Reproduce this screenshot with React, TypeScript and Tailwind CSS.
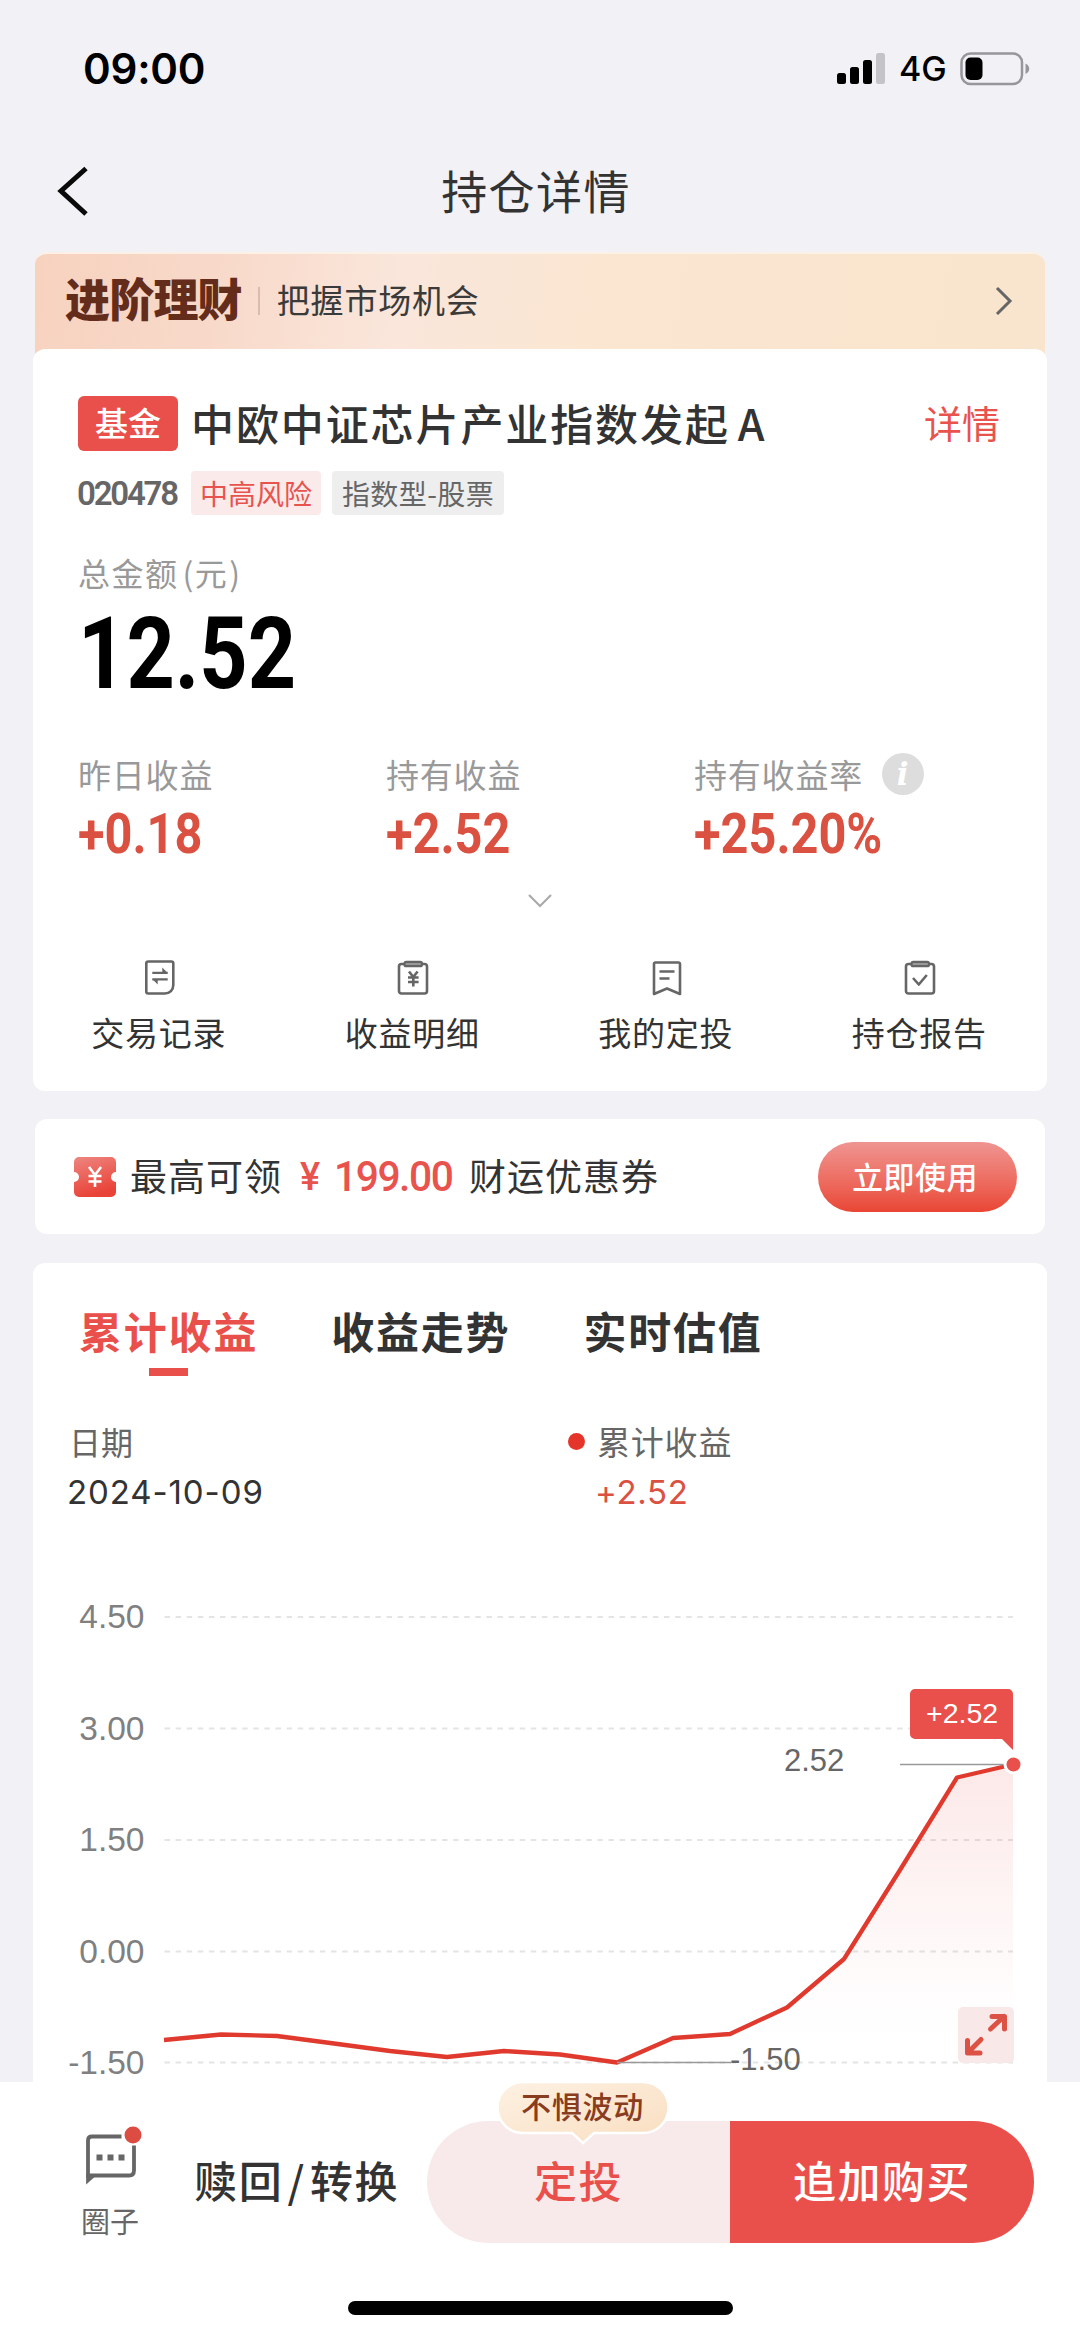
import type { ReactNode } from 'react'

const metrics = [
  { label: '昨日收益', value: '+0.18' },
  { label: '持有收益', value: '+2.52' },
  { label: '持有收益率', value: '+25.20%', info: true },
]

const tabs = ['累计收益', '收益走势', '实时估值']

const gridLines = [
  { label: '4.50', y: 37 },
  { label: '3.00', y: 148.5 },
  { label: '1.50', y: 260 },
  { label: '0.00', y: 371.5 },
  { label: '-1.50', y: 482.5 },
]

const points = [
  [131, 460], [188, 454.5], [244, 456], [301, 463.5], [357, 471], [414, 477], [471, 471], [527, 474.5],
  [584, 482.5], [640, 458], [697, 454], [754, 427.5], [811, 379], [867, 290], [924, 197.5], [980, 184.5],
]
const linePath = points.map(([x, y], i) => `${i === 0 ? 'M' : 'L'}${x} ${y}`).join(' ')

function StatusBar() {
  return (
    <div className="flex h-[138px] items-center justify-between pl-[83px] pr-[50px]">
      <span className="font-['Inter',sans-serif] text-[42px] font-semibold leading-none tracking-[-0.2px] text-black">09:00</span>
      <div className="flex items-center">
        <svg width="48" height="34" viewBox="0 0 48 34">
          <rect x="0" y="21" width="9" height="11" rx="2.5" />
          <rect x="13" y="15" width="9" height="17" rx="2.5" />
          <rect x="26" y="8" width="9" height="24" rx="2.5" />
          <rect x="39" y="1" width="9" height="31" rx="2.5" fill="#c4c4c8" />
        </svg>
        <span className="ml-[14px] w-[61px] font-['Inter',sans-serif] text-[34px] font-medium leading-none text-black">4G</span>
        <svg width="70" height="34" viewBox="0 0 70 34">
          <rect x="1.5" y="1.5" width="60.500" height="30.500" rx="9" fill="none" stroke="#97979b" strokeWidth="2.5" />
          <rect x="5.500" y="5.500" width="17" height="22.500" rx="5" />
          <path d="M65.500 11.500c5 2 5 8.500 0 10.500z" fill="#97979b" />
        </svg>
      </div>
    </div>
  )
}

function NavBar() {
  return (
    <div className="flex h-[114px] items-start px-[54px]">
      <svg width="40" height="52" viewBox="0 0 40 52" className="mt-[27px]" fill="none" stroke="#0a0a0a" strokeWidth="5">
        <path d="M32 3.500L7 26l25 23" />
      </svg>
      <h1 className="mr-[48px] mt-[24px] flex-1 text-center text-[46px] leading-[54px] tracking-[1.4px] text-[#333]">持仓详情</h1>
    </div>
  )
}

function ActionIcon({ kind }: { kind: string }) {
  return (
    <svg width="36" height="40" viewBox="0 0 36 40" fill="none" stroke="#666" strokeWidth="2.600" strokeLinejoin="round">
      {kind === 'records' && (
        <>
          <path d="M6.300 3.500h23a2 2 0 0 1 2 2V27c0 5-3.500 8.500-8.500 8.500H6.300a2 2 0 0 1-2-2v-28a2 2 0 0 1 2-2z" />
          <path d="M10.300 14.800h15.400M10.300 21.300h15.400" strokeWidth="2.200" />
          <path d="M20.300 9.500l5.400 5.500h-5.400zM15.700 26.500l-5.400-5.500h5.400z" fill="#666" stroke="none" />
        </>
      )}
      {(kind === 'income' || kind === 'report') && (
        <>
          <rect x="4" y="6" width="28" height="29.500" rx="2.500" />
          <rect x="9.500" y="3.800" width="17.500" height="4.400" rx="1.800" fill="#999" strokeWidth="2.200" />
        </>
      )}
      {kind === 'income' && <path d="M14 13.500l4.300 5.500 4.300-5.500M13 19.500h10.600M13 24h10.600M18.300 19v9.500" />}
      {kind === 'report' && <path d="M11 20l5.800 6.500 8-9.500" />}
      {kind === 'plan' && (
        <>
          <path d="M6.500 4.500h23a1.500 1.500 0 0 1 1.500 1.500v30l-13-5.500L5 36V6a1.500 1.500 0 0 1 1.500-1.500z" />
          <path d="M10.500 13.500h15M10.500 20.500h10" />
        </>
      )}
    </svg>
  )
}

function Action({ kind, children }: { kind: string; children: ReactNode }) {
  return (
    <div className="flex flex-col items-center">
      <ActionIcon kind={kind} />
      <span className="mr-[2px] mt-[14px] text-[33px] leading-[40px] tracking-[0.8px] text-[#333]">{children}</span>
    </div>
  )
}

function Banner() {
  return (
    <div className="mx-[35px] flex h-[109px] items-center rounded-t-[12px] border-t-2 border-[#fcf1e6] bg-[linear-gradient(100deg,#f7d2bf_0%,#f8d9c9_18%,#fae6db_36%,#fae6d1_55%,#f9e4cd_100%)] pb-[17px] pl-[30px] pr-[32px]">
      <span className="pb-[3px] text-[45px] font-black leading-none tracking-[-0.8px] text-[#642c1b]">进阶理财</span>
      <span className="ml-[16px] mt-[3px] h-[28px] w-[2px] bg-[#d9bcae]" />
      <span className="ml-[17px] flex-1 text-[33px] leading-none tracking-[0.8px] text-[#3a3a3a]">把握市场机会</span>
      <svg width="18" height="30" viewBox="0 0 18 30" className="mt-[3px]" fill="none" stroke="#666" strokeWidth="3">
        <path d="M2 2l13 13L2 28" />
      </svg>
    </div>
  )
}

function HoldingCard() {
  return (
    <section className="relative mx-[33px] -mt-[12px] h-[742px] rounded-[12px] bg-white pt-[47px]">
      <div className="flex h-[55px] items-center pl-[45px] pr-[47px]">
        <span className="flex h-[55px] w-[100px] items-center justify-center rounded-[6px] bg-[#ea504b] pb-[2px] text-[33px] font-medium leading-none text-white">基金</span>
        <h2 className="ml-[13px] flex-1 whitespace-nowrap pb-[3px] text-[43px] font-medium leading-none tracking-[1.9px] text-[#333]">
          中欧中证芯片产业指数发起<span className="ml-[8px]">A</span>
        </h2>
        <span className="pb-[4px] text-[38px] leading-none text-[#e8534e]">详情</span>
      </div>

      <div className="mt-[20px] flex h-[44px] items-center pl-[44px]">
        <span className="w-[101px] font-['Roboto',sans-serif] text-[33px] font-semibold leading-none tracking-[-2.200px] text-[#666]">020478</span>
        <span className="ml-[13px] flex h-[44px] w-[130px] items-center justify-center rounded-[4px] bg-[#faeaea] pb-[1px] text-[28px] leading-none text-[#e8534e]">中高风险</span>
        <span className="ml-[11px] flex h-[44px] w-[172px] items-center justify-center rounded-[4px] bg-[#eee] pb-[1px] text-[28px] leading-none tracking-[0.4px] text-[#666]">指数型-股票</span>
      </div>

      <p className="mt-[37px] pl-[45px] text-[32px] leading-[40px] tracking-[1.500px] text-[#999]">总金额<span className="ml-[4px]">(</span>元<span className="ml-[1px]">)</span></p>
      <p className="mt-[12px] w-[400px] origin-left scale-x-[0.835] pl-[54px] font-['Roboto',sans-serif] text-[101px] font-bold leading-[100px] text-black">12.52</p>

      <div className="mt-[48px] grid grid-cols-[308px_308px_1fr] pl-[45px]">
        {metrics.map((m) => (
          <div key={m.label}>
            <div className="flex h-[44px] items-center text-[33px] leading-none tracking-[0.8px] text-[#999]">
              {m.label}
              {m.info && (
                <span className="ml-[19px] flex size-[42px] items-center justify-center rounded-full bg-[#ddd] font-['DejaVu_Serif',serif] text-[31px] font-bold italic leading-none text-white">i</span>
              )}
            </div>
            <p className="mt-[10px] origin-left scale-x-[0.885] font-['Roboto',sans-serif] text-[55px] font-bold leading-[56px] text-[#da5141]">{m.value}</p>
          </div>
        ))}
      </div>

      <svg width="26" height="16" viewBox="0 0 26 16" className="mx-auto mt-[31px]" fill="none" stroke="#aaa" strokeWidth="2.200">
        <path d="M2 2l11 11L24 2" />
      </svg>

      <div className="mt-[49px] grid grid-cols-4">
        <Action kind="records">交易记录</Action>
        <Action kind="income">收益明细</Action>
        <Action kind="plan">我的定投</Action>
        <Action kind="report">持仓报告</Action>
      </div>
    </section>
  )
}

function CouponCard() {
  return (
    <section className="mx-[35px] mt-[28px] flex h-[115px] items-center rounded-[12px] bg-white pl-[39px] pr-[28px]">
      <svg width="42" height="40" viewBox="0 0 42 40">
        <defs>
          <linearGradient id="ticket" x1="0" y1="0" x2="0.300" y2="1">
            <stop offset="0" stopColor="#ee8580" />
            <stop offset="1" stopColor="#e94337" />
          </linearGradient>
        </defs>
        <path d="M5 0h32a5 5 0 0 1 5 5v10a5 5 0 0 0 0 10v10a5 5 0 0 1-5 5H5a5 5 0 0 1-5-5V25a5 5 0 0 0 0-10V5a5 5 0 0 1 5-5z" fill="url(#ticket)" />
        <path d="M15 10l6 8 6-8M14.500 19h13M14.500 24.500h13M21 18v12" fill="none" stroke="#fff" strokeWidth="2.600" />
      </svg>
      <span className="ml-[14px] pb-[2px] text-[37px] leading-none tracking-[1px] text-[#333]">最高可领</span>
      <span className="ml-[18px] w-[34px] font-['Roboto',sans-serif] text-[38px] font-medium leading-none text-[#e8534e]">¥</span>
      <span className="w-[135px] origin-left scale-x-[0.97] font-['Roboto',sans-serif] text-[42px] font-medium leading-none tracking-[-1.500px] text-[#e8534e]">199.00</span>
      <span className="flex-1 pb-[2px] text-[37px] leading-none tracking-[1px] text-[#333]">财运优惠券</span>
      <button className="h-[70px] w-[199px] rounded-full bg-linear-to-b from-[#ef9491] to-[#e94534] pb-[2px] pr-[5px] text-[31px] font-medium leading-none tracking-[0.5px] text-white">立即使用</button>
    </section>
  )
}

function TrendChart() {
  return (
    <svg width="1014" height="502" viewBox="0 0 1014 502" className="font-['Liberation_Sans',Arial,sans-serif]">
      <defs>
        <linearGradient id="area" x1="0" y1="184" x2="0" y2="482" gradientUnits="userSpaceOnUse">
          <stop offset="0" stopColor="#e8534e" stopOpacity="0.13" />
          <stop offset="0.800" stopColor="#e8534e" stopOpacity="0.01" />
          <stop offset="1" stopColor="#e8534e" stopOpacity="0" />
        </linearGradient>
      </defs>
      {gridLines.map((g) => (
        <g key={g.label}>
          <text x="111.500" y={g.y + 11} textAnchor="end" fontSize="33.500" fill="#808080">{g.label}</text>
          <line x1="131.500" x2="980" y1={g.y} y2={g.y} stroke="#e4e4e4" strokeWidth="2.200" strokeDasharray="5.500 5.600" />
        </g>
      ))}
      <path d={`${linePath} L980 482 L131 482 Z`} fill="url(#area)" />
      <path d={linePath} fill="none" stroke="#e03a2e" strokeWidth="4.300" strokeLinejoin="round" />

      {/* lowest and highest markers */}
      <path d="M584 482.500H698M867 184.500H972" stroke="#999" strokeWidth="1.500" />
      <text x="697" y="490" fontSize="31" fill="#666">-1.50</text>
      <text x="751" y="191" fontSize="31" fill="#666">2.52</text>
      <circle cx="980.500" cy="184.500" r="8.500" fill="#ea504b" stroke="#fff" strokeWidth="3" />

      <path d="M882 109h93a5 5 0 0 1 5 5v56l-11-11h-87a5 5 0 0 1-5-5v-40a5 5 0 0 1 5-5z" fill="#ea504b" />
      <text x="893" y="143" fontSize="28.500" fill="#fff">+2.52</text>

      <rect x="925" y="427" width="56" height="56" rx="5" fill="#f8e9e8" />
      <g fill="none" stroke="#dc5244" strokeWidth="5" strokeLinecap="round" strokeLinejoin="round">
        <path d="M957.500 449l13.500-12.500M959 436.500h12.500v12.500" />
        <path d="M948 459.500l-13 13M934.500 460.500v12.500h12.500" />
      </g>
    </svg>
  )
}

function ProfitCard() {
  return (
    <section className="mx-[33px] mt-[29px] h-[819px] overflow-hidden rounded-t-[12px] bg-white pt-[37px]">
      <div className="flex gap-[73px] pl-[46px]">
        {tabs.map((t, i) => (
          <div key={t} className={`flex h-[77px] flex-col items-center text-[43px] font-bold leading-[60px] tracking-[1.800px] ${i === 0 ? 'text-[#ea504b]' : 'text-[#333]'}`}>
            {t}
            {i === 0 && <span className="mt-[8px] h-[8px] w-[39px] bg-[#ea504b]" />}
          </div>
        ))}
      </div>

      <div className="mt-[41px] grid grid-cols-[535px_1fr] pl-[36px]">
        <div>
          <p className="text-[32px] leading-[46px] text-[#666]">日期</p>
          <p className="-ml-[2px] mt-[5px] font-['Inter',sans-serif] text-[33px] leading-[46px] tracking-[0.900px] text-[#333]">2024-10-09</p>
        </div>
        <div>
          <div className="-ml-[36px] flex items-center">
            <span className="size-[17px] rounded-full bg-[#e5352a]" />
            <p className="ml-[12px] text-[33px] leading-[46px] tracking-[0.800px] text-[#666]">累计收益</p>
          </div>
          <p className="-ml-[9px] mt-[5px] font-['Inter',sans-serif] text-[33px] leading-[46px] tracking-[0.700px] text-[#da5141]">+2.52</p>
        </div>
      </div>

      <div className="mt-[65px]">
        <TrendChart />
      </div>
    </section>
  )
}

function BottomBar() {
  return (
    <footer className="relative h-[255px] bg-white">
      <div className="flex h-[210px] items-start pt-[39px]">
        <div className="ml-[72px] flex w-[78px] flex-col items-center pt-[10px]">
          <svg width="60" height="66" viewBox="0 0 60 66" className="-mt-[14px] overflow-visible" fill="none" stroke="#666" strokeWidth="3.800">
            <path d="M40.500 19.500H11q-4 0-4 4V58.500H48q5 0 5-5V28.500" />
            <path d="M5.100 57v10.500l9-8z" fill="#666" stroke="none" />
            <path d="M15.500 40.500h6M26.500 40.500h6M37.500 40.500h6" strokeWidth="6" />
            <circle cx="52" cy="18" r="8.500" fill="#dc4c42" stroke="none" />
          </svg>
          <span className="mr-[2px] mt-[17px] text-[29px] leading-[40px] text-[#666]">圈子</span>
        </div>
        <button className="ml-[44px] mt-[28px] w-[233px] whitespace-nowrap text-left text-[43px] font-medium leading-[60px] tracking-[1.700px] text-[#333]">
          赎回<span className="mx-[4px]">/</span>转换
        </button>
        <button className="h-[122px] w-[303px] rounded-l-full bg-[#f8eaea] pb-[5px] text-[43px] font-medium leading-none tracking-[1.500px] text-[#ea504b]">
          定投
        </button>
        <button className="h-[122px] w-[304px] rounded-r-full bg-[#ea504b] pb-[5px] text-[43px] font-medium leading-none tracking-[1.500px] text-white">追加购买</button>
      </div>

      {/* hint bubble over the 定投 button */}
      <div className="absolute left-[496px] top-[-2px]">
        <svg width="174" height="66" viewBox="0 0 174 66" className="absolute left-0 top-0">
          <defs>
            <linearGradient id="bubble" x1="0" y1="0" x2="1" y2="1">
              <stop offset="0" stopColor="#fdf1e3" />
              <stop offset="1" stopColor="#f9dec0" />
            </linearGradient>
          </defs>
          <path d="M27 2h120a25.500 25.500 0 0 1 0 51H98L87 63 76 53H27a25.500 25.500 0 0 1 0-51z" fill="url(#bubble)" stroke="#fff" strokeWidth="2.500" />
        </svg>
        <span className="relative block w-[173px] text-center text-[30px] font-medium leading-[50px] tracking-[0.800px] text-[#8a3c1e]">不惧波动</span>
      </div>

      <div className="mx-auto mt-[9px] h-[14px] w-[385px] rounded-full bg-black" />
    </footer>
  )
}

export default function App() {
  return (
    <main className="flex h-[2337px] w-[1080px] flex-col overflow-hidden bg-[#f2f1f6] font-['Noto_Sans_CJK_SC',sans-serif]">
      <StatusBar />
      <NavBar />
      <Banner />
      <HoldingCard />
      <CouponCard />
      <ProfitCard />
      <BottomBar />
    </main>
  )
}
